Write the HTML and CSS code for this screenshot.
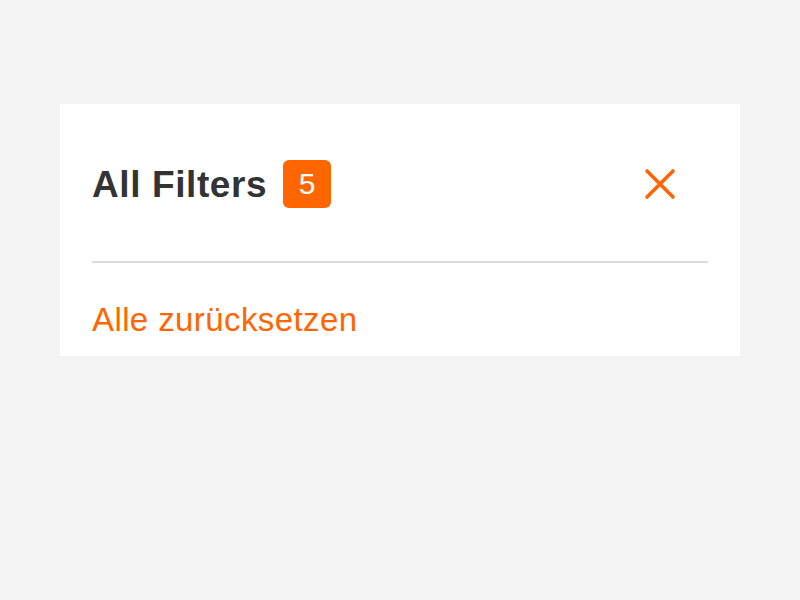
FILE: index.html
```
<!DOCTYPE html>
<html>
<head>
<meta charset="utf-8">
<link rel="stylesheet" href="styles.css">
</head>
<body>
<div class="panel">
  <div class="header">
    <h1 class="title">All Filters</h1>
    <span class="badge">5</span>
    <button class="close" aria-label="Schließen">
      <svg width="32" height="32" viewBox="0 0 32 32"><path d="M3 3 L29 29 M29 3 L3 29" stroke="#ff6600" stroke-width="3.6" stroke-linecap="round" fill="none"/></svg>
    </button>
  </div>
  <div class="divider"></div>
  <a class="reset">Alle zurücksetzen</a>
</div>
</body>
</html>
```
FILE: styles.css
```
html, body { margin: 0; padding: 0; }
body {
  background: #f4f4f4;
  font-family: "Liberation Sans", Arial, sans-serif;
  width: 800px;
  height: 600px;
  padding-top: 104px;
  box-sizing: border-box;
}
.panel {
  margin: 0 60px;
  background: #fff;
  padding: 56px 32px 0 32px;
  height: 252px;
  box-sizing: border-box;
}
.header {
  display: flex;
  align-items: center;
  height: 48px;
}
.title {
  margin: 0;
  font-size: 37px;
  font-weight: 700;
  color: #333;
  letter-spacing: 0.6px;
  line-height: 48px;
  padding-top: 2px;
}
.badge {
  margin-left: 16px;
  width: 48px;
  height: 48px;
  border-radius: 6px;
  background: #ff6600;
  color: #fff;
  font-size: 30px;
  display: flex;
  align-items: center;
  justify-content: center;
}
.close {
  margin-left: auto;
  margin-right: 32px;
  background: none;
  border: 0;
  padding: 0;
  width: 32px;
  height: 32px;
  display: flex;
}
.divider {
  margin-top: 53px;
  height: 2px;
  background: #dcdcdc;
}
.reset {
  display: block;
  margin-top: 37px;
  color: #ff6600;
  font-size: 33px;
  line-height: 40px;
  letter-spacing: 0.4px;
}
```
